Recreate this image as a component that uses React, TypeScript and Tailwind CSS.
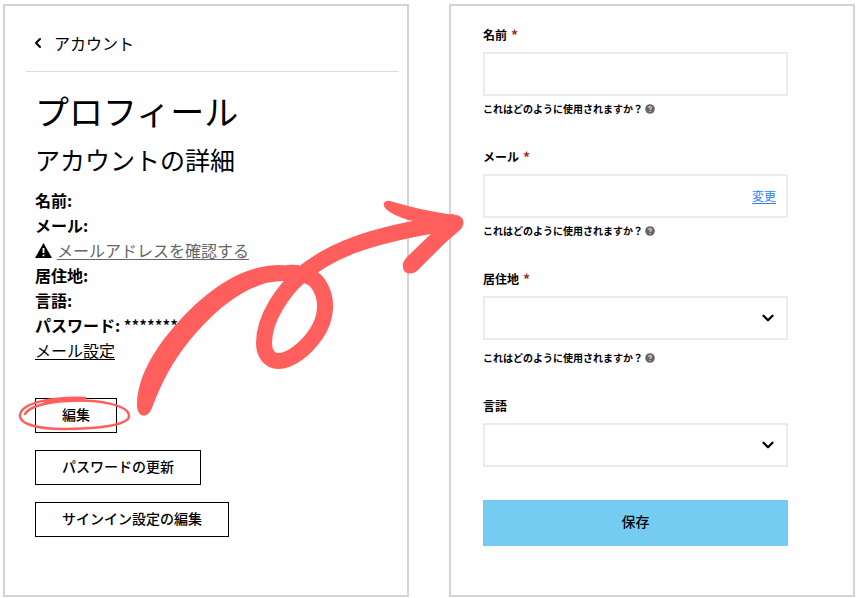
import React from 'react';
import { ChevronDown, ChevronLeft } from 'lucide-react';

interface FieldProps {
  id: string;
  label: string;
  required?: boolean;
  helpClass?: string;
  children: React.ReactNode;
}

const HelpHint: React.FC<{ className?: string }> = ({ className = 'mt-1' }) => (
  <p className={`${className} flex h-[18px] items-center gap-[2px] pb-px text-[10px] font-bold`}>
    これはどのように使用されますか？
    <svg viewBox="0 0 10 10" className="size-[10px] shrink-0" aria-hidden="true">
      <circle cx="5" cy="5" r="4.8" fill="#666" />
      <path d="M3.6 3.9c.1-1.8 2.9-1.7 2.8-.1 0 1-1.3 1-1.4 2.1" fill="none" stroke="#ddd" strokeWidth="1.1" />
      <circle cx="5" cy="7.4" r=".65" fill="#ddd" />
    </svg>
  </p>
);

const Field: React.FC<FieldProps> = ({ id, label, required, helpClass, children }) => (
  <div>
    <label htmlFor={id} className="mb-[7px] flex h-5 items-center gap-1 text-xs font-bold">
      {label}
      {required && <span className="text-sm text-[#b3261e]">*</span>}
    </label>
    {children}
    {helpClass && <HelpHint className={helpClass} />}
  </div>
);

const SelectBox: React.FC<{ id: string }> = ({ id }) => (
  <div className="relative">
    <select id={id} className="block h-11 w-full appearance-none border-2 border-[#ebebeb] bg-white px-3 text-sm outline-none">
      <option value=""></option>
    </select>
    <ChevronDown size={18} strokeWidth={3} className="pointer-events-none absolute top-[13px] right-[11px]" />
  </div>
);

const buttonClass = 'h-[35px] border border-black px-[26px] pb-1 text-sm font-medium';

const ProfilePanel: React.FC = () => (
  <section className="border-2 border-[#d4d4d4] bg-[#fefefe] pr-2 pl-[21px]">
    <nav className="border-b border-[#dcdcdc] pt-[25px] pb-4 pl-1">
      <a href="#account" className="flex items-center gap-2 text-base leading-6">
        <ChevronLeft size={16} strokeWidth={3} />
        アカウント
      </a>
    </nav>
    <div className="pl-[9px]">
      <h1 className="mt-[15px] text-[34px] leading-[48px]">プロフィール</h1>
      <h2 className="mt-2 text-[25px] leading-8">アカウントの詳細</h2>
      <div className="mt-[13px] text-base leading-[25px]">
        <p className="font-bold">名前:</p>
        <p className="font-bold">メール:</p>
        <p className="flex items-center gap-[5px]">
          <svg viewBox="0 0 17 15" className="h-[15px] w-[17px]" aria-hidden="true">
            <path d="M8.5 0 17 15H0Z" fill="#000" />
            <path d="M8.5 5v5M8.5 11.4v1.8" stroke="#fff" strokeWidth="1.8" />
          </svg>
          <a href="#verify" className="text-[#666] underline underline-offset-2">メールアドレスを確認する</a>
        </p>
        <p className="font-bold">居住地:</p>
        <p className="font-bold">言語:</p>
        <p>
          <span className="font-bold">パスワード:</span> <span className="font-medium">**********</span>
        </p>
        <p>
          <a href="#mail-settings" className="underline underline-offset-2">メール設定</a>
        </p>
      </div>
      <div className="mt-[35px] flex flex-col items-start gap-[17px]">
        <button type="button" className={buttonClass}>編集</button>
        <button type="button" className={buttonClass}>パスワードの更新</button>
        <button type="button" className={buttonClass}>サインイン設定の編集</button>
      </div>
    </div>
  </section>
);

const EditPanel: React.FC = () => (
  <section className="border-2 border-[#d4d4d4] bg-[#fefefe] pt-[19px] pr-[65px] pb-12 pl-8">
    <form className="flex flex-col gap-[29px]">
      <Field id="name" label="名前" required helpClass="mt-1">
        <input id="name" type="text" className="block h-11 w-full border-2 border-[#ebebeb] bg-white px-3 text-sm outline-none" />
      </Field>
      <Field id="email" label="メール" required helpClass="mt-1">
        <div className="flex h-11 items-center border-2 border-[#ebebeb] bg-white pr-[10px]">
          <input id="email" type="email" className="min-w-0 flex-1 px-3 text-sm outline-none" />
          <a href="#change" className="text-xs text-[#2f7ff0] underline underline-offset-2">変更</a>
        </div>
      </Field>
      <Field id="region" label="居住地" required helpClass="mt-[9px]">
        <SelectBox id="region" />
      </Field>
      <Field id="language" label="言語">
        <SelectBox id="language" />
      </Field>
      <button type="submit" className="mt-1 h-[46px] w-full bg-[#74ccf2] pb-1 text-sm font-medium">保存</button>
    </form>
  </section>
);

// Hand-drawn marks laid over both panels
const Annotations: React.FC = () => (
  <svg
    viewBox="0 0 858 598"
    className="pointer-events-none absolute top-0 left-1/2 h-[598px] w-[858px] -translate-x-1/2"
    fill="none"
    aria-hidden="true"
  >
    <path
      d="M25 414C29 407 45 402 67 401C98 399 129 405 129 416C129 426 92 429 63 429C38 429 20 424 20 416C20 402 54 397 85 398"
      stroke="#ff5f5c"
      strokeWidth="2.5"
      strokeLinecap="round"
    />
    <path d="M45 403C55 400 70 399 84 399" stroke="#ff5f5c" strokeWidth="3" strokeLinecap="round" />
    <path
      d="M137 405C137 378 154 350 173 328C204 292 240 265 280 265L304 267L300 283L285 281C276 281 268 282 260 285C230 296 208 319 190 340C172 362 161 384 152 408C147 420 137 417 137 405Z"
      fill="#ff5f5c"
    />
    <path
      d="M287 273C303 272 313 276 319 285C328 299 327 318 316 334C305 350 290 361 278 361C270 361 264 354 264 343C264 318 283 291 301 275C329 252 365 235 455 222"
      stroke="#ff5f5c"
      strokeWidth="16"
    />
    <path
      d="M390 201C405 205 428 212 456 215C464 216 466 224 460 230L445 243L418 270C412 276 403 274 403 267C402 262 406 258 410 254L434 231L413 221C404 219 393 215 386 209C381 204 385 200 390 201Z"
      fill="#ff5f5c"
    />
  </svg>
);

const App: React.FC = () => (
  <main
    lang="ja"
    className="relative grid min-h-screen grid-cols-2 gap-10 bg-white px-[3px] pt-1 pb-px font-['Noto_Sans_CJK_JP',sans-serif] text-black"
  >
    <ProfilePanel />
    <EditPanel />
    <Annotations />
  </main>
);

export default App;
